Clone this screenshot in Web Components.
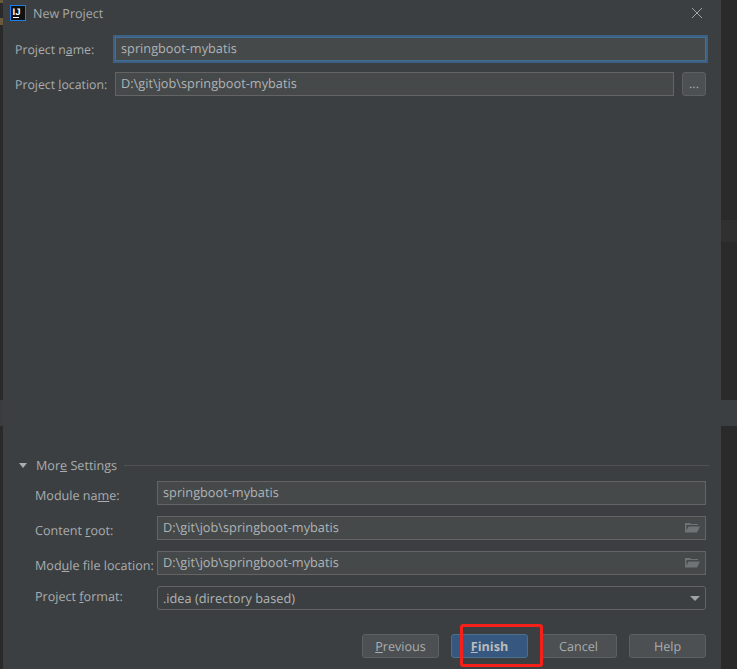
<!DOCTYPE html>
<html><head><meta charset="utf-8">
<style>
html,body{margin:0;padding:0;background:#2a2a2a}
body{width:737px;height:669px;overflow:hidden;font:12.6px "Open Sans",sans-serif;color:#a9adaf;text-rendering:geometricPrecision}
</style></head><body>
<template id="t-text">
<style>
:host{display:flex;box-sizing:border-box;height:24px;min-width:0;flex:1;align-items:center;justify-content:space-between;background:#45494a;border:1px solid #646464;padding:0 5px 2px 5px;color:#b0b4b6;font-size:12.75px;white-space:nowrap}
:host([focus]){outline:2px solid #3d6185;outline-offset:0;border-color:#466d94}
:host([combo]){background:#3c3f41;border-radius:3px;padding-bottom:0}
svg{display:block;margin-right:1px;margin-top:2px}
</style><slot></slot><slot name="end"></slot>
</template>
<template id="t-row">
<style>
:host{display:flex;align-items:center;height:24px}
.l{flex:none;box-sizing:border-box;width:var(--lw,100px);color:#a9adaf;font-size:var(--lf,12.6px);white-space:nowrap}
:host([low]) .l{padding-top:4px}
:host([high]) .l{padding-bottom:4px}
.c{flex:1;display:flex;min-width:0;gap:8px}
</style><div class="l"><slot name="label"></slot></div><div class="c"><slot></slot></div>
</template>
<template id="t-btn">
<style>
:host{display:flex;box-sizing:border-box;width:77px;height:24px;align-items:center;justify-content:center;border:1px solid #5e6060;border-radius:3px;background:#4c5052;color:#a9adaf;font-size:12.6px}
:host([primary]){background:#365880;border-color:#4c708c;color:#bbbbbb;font-weight:700}
:host([small]){width:24px;padding-bottom:1px}
</style><slot></slot>
</template>
<template id="t-dialog">
<style>
:host{display:block;position:relative;box-sizing:border-box;width:718px;height:669px;background:#3c3f41;flex:none}
.wrap{display:flex;flex-direction:column;height:100%;box-sizing:border-box;padding:0 15px 11px 12px}
.title{display:flex;align-items:center;height:26px;margin-left:-5px;gap:7px;color:#a6a9ab;font-size:12.5px}
.close{margin-left:auto;margin-right:3px}
.top{display:flex;flex-direction:column;gap:11px;margin-top:11px;--lw:100px;--lf:12.3px}
.grow{flex:1}
.more{display:flex;align-items:center;height:16px;margin:0 -3px 0 4px;font-size:12.6px;color:#a9adaf}
.more i{flex:1;height:1px;background:#515151;margin-left:7px}
.tri{width:0;height:0;border:4px solid transparent;border-top:5px solid #a9adaf;border-bottom:0;margin-right:9px}
.sub{display:flex;flex-direction:column;gap:11px;margin:8px 0 0 20px;--lw:122px}
.btns{display:flex;justify-content:flex-end;gap:12px;margin-top:24px}
.mark{position:absolute;left:457px;top:624px;width:83px;height:43px;box-sizing:border-box;border:3px solid #f5201a;border-radius:3px}
</style>
<div class="wrap">
<div class="title"><svg width="16" height="16" viewBox="0 0 16 16"><rect x=".5" y=".5" width="15" height="15" fill="#111" stroke="#1c7fe8"/><text x="2.5" y="10" fill="#fff" font-family="Liberation Sans" font-size="9.5" font-weight="700">IJ</text><rect x="3" y="12" width="6" height="1" fill="#fff"/></svg><span>New Project</span>
<svg class="close" width="12" height="12" viewBox="0 0 12 12"><path d="M1 1L11 11M11 1L1 11" stroke="#a0a3a5" fill="none"/></svg></div>
<div class="top"><slot name="top"></slot></div>
<div class="grow"></div>
<div class="more"><span class="tri"></span><span><slot name="more"></slot></span><i></i></div>
<div class="sub"><slot name="sub"></slot></div>
<div class="btns"><slot name="btns"></slot></div>
</div>
<div class="mark"></div>
</template>
<template id="t-backdrop">
<style>
:host{display:flex;width:737px;height:669px}
.s{display:flex;flex-direction:column;flex:none;background:#2a2a2a}
.a{width:3px}.b{width:16px}
.s div{flex:none}
</style>
<div class="s a"><div style="height:3px;background:#6a5a3c"></div><div style="height:15px"></div><div style="height:7px;background:#6a5a3c"></div><div style="height:375px"></div><div style="height:26px;background:#3a3c3e"></div></div>
<slot></slot>
<div class="s b"><div style="height:220px"></div><div style="height:22px;background:#303030"></div><div style="height:158px"></div><div style="height:26px;background:#3c3f41"></div></div>
</template>
<ij-backdrop>
<ij-dialog>
<div slot="top" style="display:contents">
<ij-row><span slot="label">Project n<u>a</u>me:</span><ij-text focus>springboot-mybatis</ij-text></ij-row>
<ij-row><span slot="label">Project <u>l</u>ocation:</span><ij-text>D:\git\job\springboot-mybatis</ij-text><ij-btn small>...</ij-btn></ij-row>
</div>
<span slot="more">Mor<u>e</u> Settings</span>
<div slot="sub" style="display:contents">
<ij-row low><span slot="label">Module na<u>m</u>e:</span><ij-text>springboot-mybatis</ij-text></ij-row>
<ij-row low><span slot="label">Content <u>r</u>oot:</span><ij-text>D:\git\job\springboot-mybatis<svg slot="end" width="15" height="11" viewBox="0 0 15 11"><path d="M0 1V10.5H12L15 4.5H3.5L1.5 8.5V3H13V2H6L5 1Z" fill="#6f7375"/></svg></ij-text></ij-row>
<ij-row low><span slot="label">Mod<u>u</u>le file location:</span><ij-text>D:\git\job\springboot-mybatis<svg slot="end" width="15" height="11" viewBox="0 0 15 11"><path d="M0 1V10.5H12L15 4.5H3.5L1.5 8.5V3H13V2H6L5 1Z" fill="#6f7375"/></svg></ij-text></ij-row>
<ij-row high><span slot="label">Project <u>f</u>ormat:</span><ij-text combo>.idea (directory based)<svg slot="end" width="10" height="5" viewBox="0 0 10 5"><path d="M0 0H10L5 5Z" fill="#a0a3a5"/></svg></ij-text></ij-row>
</div>
<div slot="btns" style="display:contents">
<ij-btn><span><u>P</u>revious</span></ij-btn><ij-btn primary><span><u>F</u>inish</span></ij-btn><ij-btn>Cancel</ij-btn><ij-btn>Help</ij-btn>
</div>
</ij-dialog>
</ij-backdrop>
<script>
for (const [n,t] of [['ij-text','t-text'],['ij-row','t-row'],['ij-btn','t-btn'],['ij-dialog','t-dialog'],['ij-backdrop','t-backdrop']]) {
  customElements.define(n, class extends HTMLElement {
    constructor(){super();this.attachShadow({mode:'open'}).appendChild(document.getElementById(t).content.cloneNode(true));}
  });
}
</script>
</body></html>
